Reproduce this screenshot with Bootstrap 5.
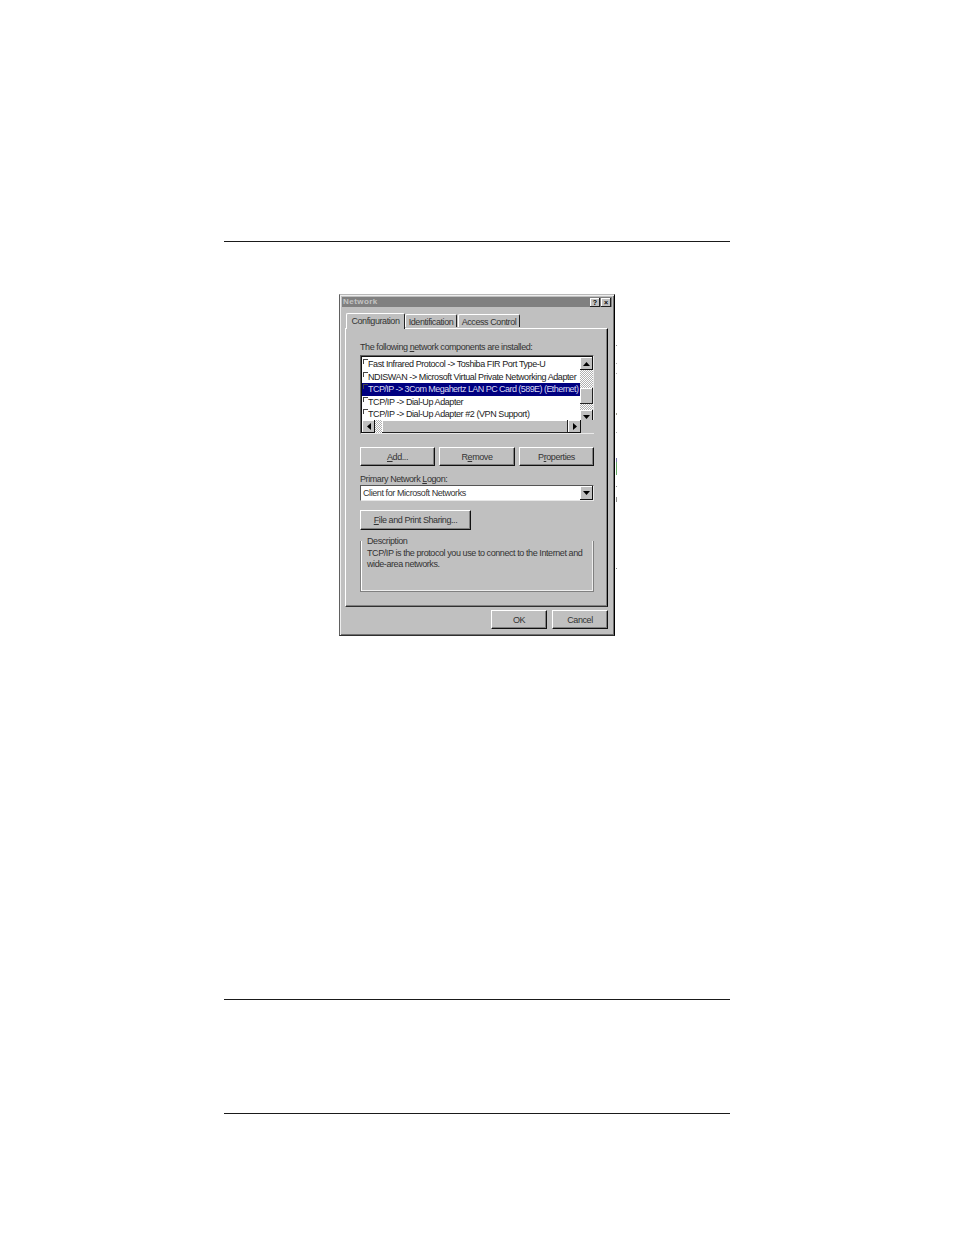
<!DOCTYPE html>
<html lang="en">
<head>
<meta charset="utf-8">
<title>Network</title>
<link href="https://cdn.jsdelivr.net/npm/bootstrap@5.3.0/dist/css/bootstrap.min.css" rel="stylesheet">
<style>
html,body{background:#fff;margin:0;}
.sheet{width:506px;margin-left:224px;height:1235px;padding-top:241px;}
.rule-line{height:1px;background:#1a1a1a;}
.rule-a{margin-bottom:52px;}
.rule-b{margin-top:363px;margin-bottom:113px;}
.dlg{width:276px;height:342px;margin-left:115px;background:#c0c0c0;padding:2px 2px 0 2px;position:relative;
 border-top:1px solid #b8b8b8;border-left:1px solid #606060;border-right:1px solid #000;border-bottom:1px solid #303030;
 box-shadow:inset 1px 1px 0 #eee,inset -1px -1px 0 #707070;
 font:9px/10px "Liberation Sans",Arial,sans-serif;letter-spacing:-.42px;color:#333;}
.dlg::after{content:"";position:absolute;right:-3px;top:50px;width:1px;height:230px;
 background:linear-gradient(#888 0 1px,transparent 1px 18px,#aaa 18px 19px,transparent 19px 28px,#aaa 28px 29px,transparent 29px 68px,#998 68px 70px,transparent 70px 87px,#aaa 87px 88px,transparent 88px 113px,#77a 113px 117px,#6a6 117px 130px,transparent 130px 141px,#888 141px 142px,transparent 142px 152px,#888 152px 157px,transparent 157px 223px,#888 223px 224px,transparent 224px);}
.ttl{height:10px;background:#808080;color:#c4c4c4;font-weight:700;font-size:8px;line-height:10px;padding-left:1px;letter-spacing:.45px;}
.cap{width:10px;height:9px;background:#c0c0c0;box-shadow:inset -1px -1px 0 #202020,inset 1px 1px 0 #fff;color:#000;font-size:7px;line-height:9px;text-align:center;font-weight:700;letter-spacing:0;}
.capgap{gap:1px;padding-right:1px;}
.tabrow{height:21px;padding-left:1px;margin-left:3px;align-items:flex-end;}
.wtab{background:#c0c0c0;height:13px;line-height:14px;text-align:center;border-top:1px solid #fff;border-left:1px solid #fff;border-right:1px solid #222;border-radius:2px 2px 0 0;margin-bottom:1px;position:relative;}
.wtab.on{height:16px;line-height:15px;margin-bottom:-1px;z-index:2;padding-bottom:3px;}
.tab-c{width:59px;}.tab-i{width:52px;}.tab-a{width:62px;margin-left:1px;}
.panel{width:263px;height:279px;margin-left:3px;padding:13px 14px 0 14px;border-top:1px solid #fff;border-left:1px solid #fff;border-right:1px solid #000;border-bottom:1px solid #303030;box-shadow:inset -1px -1px 0 #808080;}
.lbl{height:10px;white-space:nowrap;}
.u{text-decoration:underline;}
.listwrap{width:234px;height:79px;margin-top:3px;background:#fff;border-top:1px solid #606060;border-left:1px solid #606060;border-right:1px solid #e8e8e8;border-bottom:1px solid #e8e8e8;box-shadow:inset 1px 1px 0 #111;position:relative;}
.rows{width:219px;padding-top:2px;padding-left:1px;}
.lrow{height:12.6px;line-height:12.6px;padding-left:6px;white-space:nowrap;color:#222;position:relative;}
.lrow::before{content:"";position:absolute;left:1px;top:1px;width:5px;height:5px;border-top:1px solid #444;border-left:1px solid #444;}
.lrow.sel{background:#000080;color:#d8d8f0;letter-spacing:-.55px;}
.vbar{width:13px;height:66px;margin-top:1px;}
.hbar{height:13px;width:232px;position:absolute;left:1px;bottom:0;}
.corner{width:13px;background:#c0c0c0;flex:none;}
.arrowb{width:13px;height:13px;flex:none;background:#c0c0c0;box-shadow:inset -1px -1px 0 #111,inset 1px 1px 0 #fff;display:flex;align-items:center;justify-content:center;}
.dith{background-color:#fff;background-image:conic-gradient(#b0b0b0 25%,#fff 0 50%,#b0b0b0 0 75%,#fff 0);background-size:2px 2px;}
.dith-v{height:18px;}.dith-h{width:7px;}
.thumb{background:#c0c0c0;box-shadow:inset -1px -1px 0 #222,inset 1px 1px 0 #fff;}
.thumb-v{height:16px;}
.wbtn{background:#c0c0c0;color:#333;text-align:center;height:19px;border-top:1px solid #fff;border-left:1px solid #fff;border-right:1px solid #111;border-bottom:1px solid #111;box-shadow:inset -1px -1px 0 #808080;border-radius:0;padding:0;font:inherit;letter-spacing:inherit;line-height:18px;}
.wbtn:hover{background:#c0c0c0;color:#333;border-color:#fff #111 #111 #fff;}
.b-add{width:75px;}.b-rem{width:76px;}.b-pro{width:75px;}
.btnrow{margin-top:13px;gap:4px;width:234px;}
.lbl2{margin-top:8px;}
.combo{width:234px;height:16px;margin-top:1px;background:#fff;border-top:1px solid #555;border-left:1px solid #555;border-right:1px solid #e8e8e8;border-bottom:1px solid #e8e8e8;padding-left:2px;line-height:15px;position:relative;}
.combo .arrowb{position:absolute;right:0;top:0;width:13px;height:14px;}
.b-file{width:111px;margin-top:9px;height:20px;line-height:18px;}
.grp{display:flow-root;width:234px;height:51px;margin-top:11px;border:1px solid #808080;border-top:none;box-shadow:inset 1px 0 0 #fff,inset -1px -1px 0 #eee;padding:0 6px;line-height:11px;}
.grp-t{display:block;line-height:9px;height:9px;margin-top:-4px;}
.grp-b{margin-top:2px;}
.foot{width:266px;gap:5px;margin-top:3px;justify-content:flex-end;}
.foot .wbtn{width:56px;height:19px;}
</style>
</head>
<body>
<div class="sheet">
  <div class="rule-line rule-a"></div>
  <div class="dlg d-flex flex-column">
    <div class="ttl d-flex justify-content-between align-items-center">
      <span>Network</span>
      <span class="d-flex capgap"><span class="cap">?</span><span class="cap">×</span></span>
    </div>
    <div class="tabrow d-flex">
      <div class="wtab on tab-c">Configuration</div>
      <div class="wtab tab-i">Identification</div>
      <div class="wtab tab-a">Access Control</div>
    </div>
    <div class="panel">
      <div class="lbl">The following <span class="u">n</span>etwork components are installed:</div>
      <div class="listwrap">
        <div class="d-flex">
          <div class="rows">
            <div class="lrow">Fast Infrared Protocol -&gt; Toshiba FIR Port Type-U</div>
            <div class="lrow">NDISWAN -&gt; Microsoft Virtual Private Networking Adapter</div>
            <div class="lrow sel">TCP/IP -&gt; 3Com Megahertz LAN PC Card (589E) (Ethernet)</div>
            <div class="lrow">TCP/IP -&gt; Dial-Up Adapter</div>
            <div class="lrow">TCP/IP -&gt; Dial-Up Adapter #2 (VPN Support)</div>
          </div>
          <div class="vbar d-flex flex-column">
            <div class="arrowb"><svg width="7" height="4" viewBox="0 0 7 4"><path d="M3.5 0 7 4H0z" fill="#000"/></svg></div>
            <div class="dith dith-v"></div>
            <div class="thumb thumb-v"></div>
            <div class="dith flex-grow-1"></div>
            <div class="arrowb"><svg width="7" height="4" viewBox="0 0 7 4"><path d="M0 0h7L3.5 4z" fill="#000"/></svg></div>
          </div>
        </div>
        <div class="hbar d-flex">
          <div class="arrowb"><svg width="4" height="7" viewBox="0 0 4 7"><path d="M4 0v7L0 3.500z" fill="#000"/></svg></div>
          <div class="dith dith-h"></div>
          <div class="thumb flex-grow-1"></div>
          <div class="arrowb"><svg width="4" height="7" viewBox="0 0 4 7"><path d="M0 0v7l4-3.500z" fill="#000"/></svg></div>
          <div class="corner"></div>
        </div>
      </div>
      <div class="d-flex btnrow">
        <button type="button" class="btn wbtn b-add"><span class="u">A</span>dd...</button>
        <button type="button" class="btn wbtn b-rem">R<span class="u">e</span>move</button>
        <button type="button" class="btn wbtn b-pro">P<span class="u">r</span>operties</button>
      </div>
      <div class="lbl lbl2">Primary Network <span class="u">L</span>ogon:</div>
      <div class="combo">Client for Microsoft Networks
        <div class="arrowb"><svg width="7" height="4" viewBox="0 0 7 4"><path d="M0 0h7L3.500 4z" fill="#000"/></svg></div>
      </div>
      <button type="button" class="btn wbtn b-file d-block"><span class="u">F</span>ile and Print Sharing...</button>
      <div class="grp">
        <span class="grp-t">Description</span>
        <div class="grp-b">TCP/IP is the protocol you use to connect to the Internet and wide-area networks.</div>
      </div>
    </div>
    <div class="d-flex foot">
      <button type="button" class="btn wbtn">OK</button>
      <button type="button" class="btn wbtn">Cancel</button>
    </div>
  </div>
  <div class="rule-line rule-b"></div>
  <div class="rule-line"></div>
</div>
<script src="https://cdn.jsdelivr.net/npm/bootstrap@5.3.0/dist/js/bootstrap.bundle.min.js"></script>
</body>
</html>
